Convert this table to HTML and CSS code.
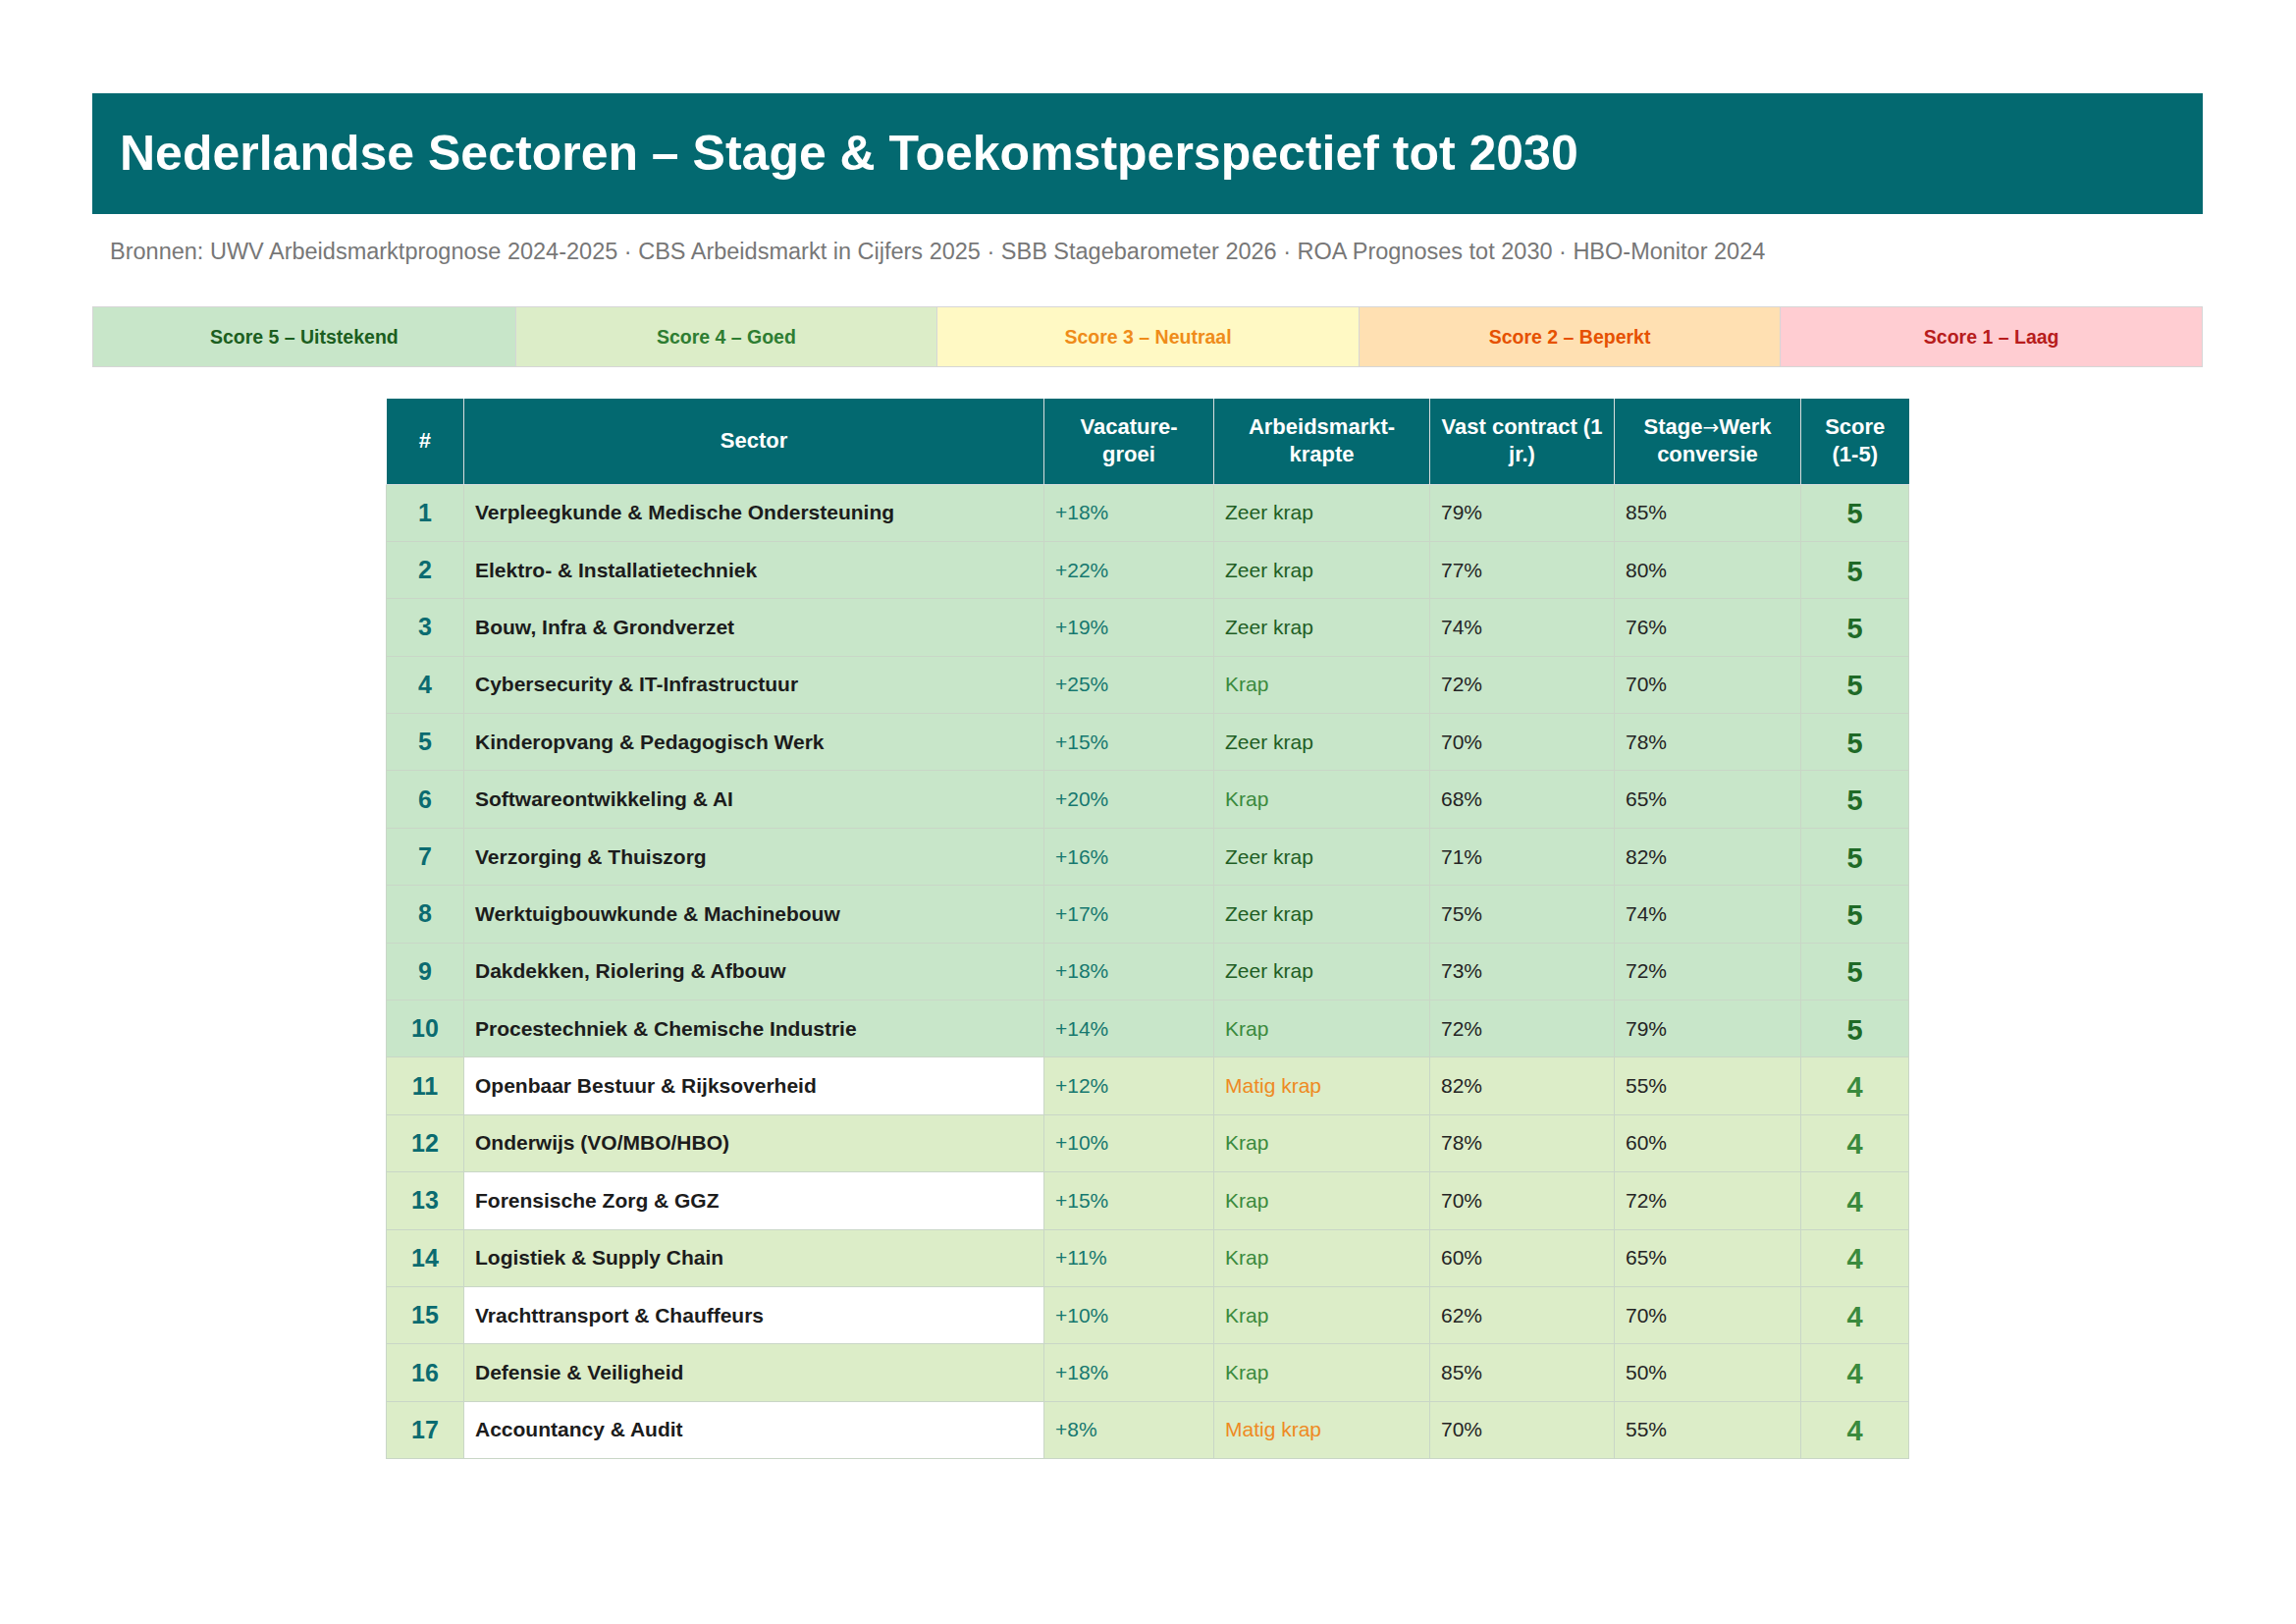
FILE: index.html
```html
<!DOCTYPE html>
<html lang="nl">
<head>
<meta charset="utf-8">
<title>Nederlandse Sectoren – Stage &amp; Toekomstperspectief tot 2030</title>
<link rel="stylesheet" href="styles.css">
</head>
<body>
<div class="page">
  <header class="banner">
    <h1>Nederlandse Sectoren – Stage &amp; Toekomstperspectief tot 2030</h1>
  </header>
  <p class="sources">Bronnen: UWV Arbeidsmarktprognose 2024-2025 · CBS Arbeidsmarkt in Cijfers 2025 · SBB Stagebarometer 2026 · ROA Prognoses tot 2030 · HBO-Monitor 2024</p>
  <div class="legend">
    <div class="lg lg5">Score 5 – Uitstekend</div>
    <div class="lg lg4">Score 4 – Goed</div>
    <div class="lg lg3">Score 3 – Neutraal</div>
    <div class="lg lg2">Score 2 – Beperkt</div>
    <div class="lg lg1">Score 1 – Laag</div>
  </div>
  <table class="sectors">
    <colgroup>
      <col class="c-num"><col class="c-sector"><col class="c-vac"><col class="c-krapte"><col class="c-vast"><col class="c-conv"><col class="c-score">
    </colgroup>
    <thead>
      <tr>
        <th>#</th>
        <th>Sector</th>
        <th>Vacature-<br>groei</th>
        <th>Arbeidsmarkt-<br>krapte</th>
        <th>Vast contract (1<br>jr.)</th>
        <th>Stage<span class="arrow">→</span>Werk<br>conversie</th>
        <th>Score<br>(1-5)</th>
      </tr>
    </thead>
    <tbody>
      <tr class="s5"><td class="num">1</td><td class="sector">Verpleegkunde &amp; Medische Ondersteuning</td><td class="vac">+18%</td><td class="zk">Zeer krap</td><td class="pct">79%</td><td class="pct">85%</td><td class="score">5</td></tr>
      <tr class="s5"><td class="num">2</td><td class="sector">Elektro- &amp; Installatietechniek</td><td class="vac">+22%</td><td class="zk">Zeer krap</td><td class="pct">77%</td><td class="pct">80%</td><td class="score">5</td></tr>
      <tr class="s5"><td class="num">3</td><td class="sector">Bouw, Infra &amp; Grondverzet</td><td class="vac">+19%</td><td class="zk">Zeer krap</td><td class="pct">74%</td><td class="pct">76%</td><td class="score">5</td></tr>
      <tr class="s5"><td class="num">4</td><td class="sector">Cybersecurity &amp; IT-Infrastructuur</td><td class="vac">+25%</td><td class="k">Krap</td><td class="pct">72%</td><td class="pct">70%</td><td class="score">5</td></tr>
      <tr class="s5"><td class="num">5</td><td class="sector">Kinderopvang &amp; Pedagogisch Werk</td><td class="vac">+15%</td><td class="zk">Zeer krap</td><td class="pct">70%</td><td class="pct">78%</td><td class="score">5</td></tr>
      <tr class="s5"><td class="num">6</td><td class="sector">Softwareontwikkeling &amp; AI</td><td class="vac">+20%</td><td class="k">Krap</td><td class="pct">68%</td><td class="pct">65%</td><td class="score">5</td></tr>
      <tr class="s5"><td class="num">7</td><td class="sector">Verzorging &amp; Thuiszorg</td><td class="vac">+16%</td><td class="zk">Zeer krap</td><td class="pct">71%</td><td class="pct">82%</td><td class="score">5</td></tr>
      <tr class="s5"><td class="num">8</td><td class="sector">Werktuigbouwkunde &amp; Machinebouw</td><td class="vac">+17%</td><td class="zk">Zeer krap</td><td class="pct">75%</td><td class="pct">74%</td><td class="score">5</td></tr>
      <tr class="s5"><td class="num">9</td><td class="sector">Dakdekken, Riolering &amp; Afbouw</td><td class="vac">+18%</td><td class="zk">Zeer krap</td><td class="pct">73%</td><td class="pct">72%</td><td class="score">5</td></tr>
      <tr class="s5"><td class="num">10</td><td class="sector">Procestechniek &amp; Chemische Industrie</td><td class="vac">+14%</td><td class="k">Krap</td><td class="pct">72%</td><td class="pct">79%</td><td class="score">5</td></tr>
      <tr class="s4 odd"><td class="num">11</td><td class="sector">Openbaar Bestuur &amp; Rijksoverheid</td><td class="vac">+12%</td><td class="mk">Matig krap</td><td class="pct">82%</td><td class="pct">55%</td><td class="score">4</td></tr>
      <tr class="s4"><td class="num">12</td><td class="sector">Onderwijs (VO/MBO/HBO)</td><td class="vac">+10%</td><td class="k">Krap</td><td class="pct">78%</td><td class="pct">60%</td><td class="score">4</td></tr>
      <tr class="s4 odd"><td class="num">13</td><td class="sector">Forensische Zorg &amp; GGZ</td><td class="vac">+15%</td><td class="k">Krap</td><td class="pct">70%</td><td class="pct">72%</td><td class="score">4</td></tr>
      <tr class="s4"><td class="num">14</td><td class="sector">Logistiek &amp; Supply Chain</td><td class="vac">+11%</td><td class="k">Krap</td><td class="pct">60%</td><td class="pct">65%</td><td class="score">4</td></tr>
      <tr class="s4 odd"><td class="num">15</td><td class="sector">Vrachttransport &amp; Chauffeurs</td><td class="vac">+10%</td><td class="k">Krap</td><td class="pct">62%</td><td class="pct">70%</td><td class="score">4</td></tr>
      <tr class="s4"><td class="num">16</td><td class="sector">Defensie &amp; Veiligheid</td><td class="vac">+18%</td><td class="k">Krap</td><td class="pct">85%</td><td class="pct">50%</td><td class="score">4</td></tr>
      <tr class="s4 odd"><td class="num">17</td><td class="sector">Accountancy &amp; Audit</td><td class="vac">+8%</td><td class="mk">Matig krap</td><td class="pct">70%</td><td class="pct">55%</td><td class="score">4</td></tr>
    </tbody>
  </table>
</div>
</body>
</html>
```
FILE: styles.css
```css
* { box-sizing: border-box; }
html, body { margin: 0; padding: 0; background: #ffffff; }
body { font-family: "Liberation Sans", Arial, Helvetica, sans-serif; color: #222; }

.page {
  padding: 95px 95px 60px 94px;
}

.banner {
  background: #036970;
  height: 123px;
  display: flex;
  align-items: center;
  padding: 0 28px;
}
.banner h1 {
  margin: 0;
  color: #ffffff;
  font-size: 50px;
  font-weight: 700;
  line-height: 1.15;
}

.sources {
  margin: 25px 0 0 18px;
  font-size: 23.5px;
  line-height: 27px;
  color: #777;
}

.legend {
  margin-top: 42px;
  display: grid;
  grid-template-columns: repeat(5, 1fr);
  border: 1px solid #d6d6d6;
  height: 62px;
}
.lg {
  display: flex;
  align-items: center;
  justify-content: center;
  font-size: 19.5px;
  font-weight: 700;
  border-left: 1px solid #d6d6d6;
}
.lg:first-child { border-left: none; }
.lg5 { background: #c8e6c9; color: #1b5e20; }
.lg4 { background: #dcedc8; color: #2e7d32; }
.lg3 { background: #fff9c4; color: #ef8c1a; }
.lg2 { background: #ffe0b2; color: #e65100; }
.lg1 { background: #ffcdd2; color: #b71c1c; }

.sectors {
  margin: 32px auto 0;
  width: 1551px;
  table-layout: fixed;
  border-collapse: collapse;
}
.c-num { width: 79px; }
.c-sector { width: 591px; }
.c-vac { width: 173px; }
.c-krapte { width: 220px; }
.c-vast { width: 188px; }
.c-conv { width: 190px; }
.c-score { width: 110px; }

.sectors th {
  background: #036970;
  color: #ffffff;
  font-size: 22px;
  font-weight: 700;
  line-height: 28px;
  height: 87px;
  padding: 0 6px;
  text-align: center;
  border: 1px solid #d9dede;
  border-top: none;
}
.sectors th:first-child { border-left: none; }
.sectors th:last-child { border-right: none; }
.arrow {
  font-family: "DejaVu Sans", sans-serif;
  font-weight: 400;
  font-size: 20px;
}

.sectors td {
  height: 58.4px;
  padding: 0 11px;
  font-size: 21px;
  border: 1px solid #c9d6c7;
  white-space: nowrap;
}
.s5 td { background: #c8e6c9; }
.s4 td { background: #dcedc8; }
.s4.odd td.sector { background: #ffffff; }

.sectors td.num {
  text-align: center;
  font-size: 25px;
  font-weight: 700;
  color: #0b6b70;
}
.sectors td.sector {
  font-weight: 700;
  color: #1c1c1c;
}
.vac { color: #16786f; }
.zk { color: #1f5e24; }
.k { color: #3a8a3d; }
.mk { color: #ee8a22; }
.pct { color: #242424; }
.sectors td.score {
  text-align: center;
  font-size: 29px;
  font-weight: 700;
  padding-top: 3px;
}
.s5 .score { color: #1f6a27; }
.s4 .score { color: #3a8a3d; }
```
